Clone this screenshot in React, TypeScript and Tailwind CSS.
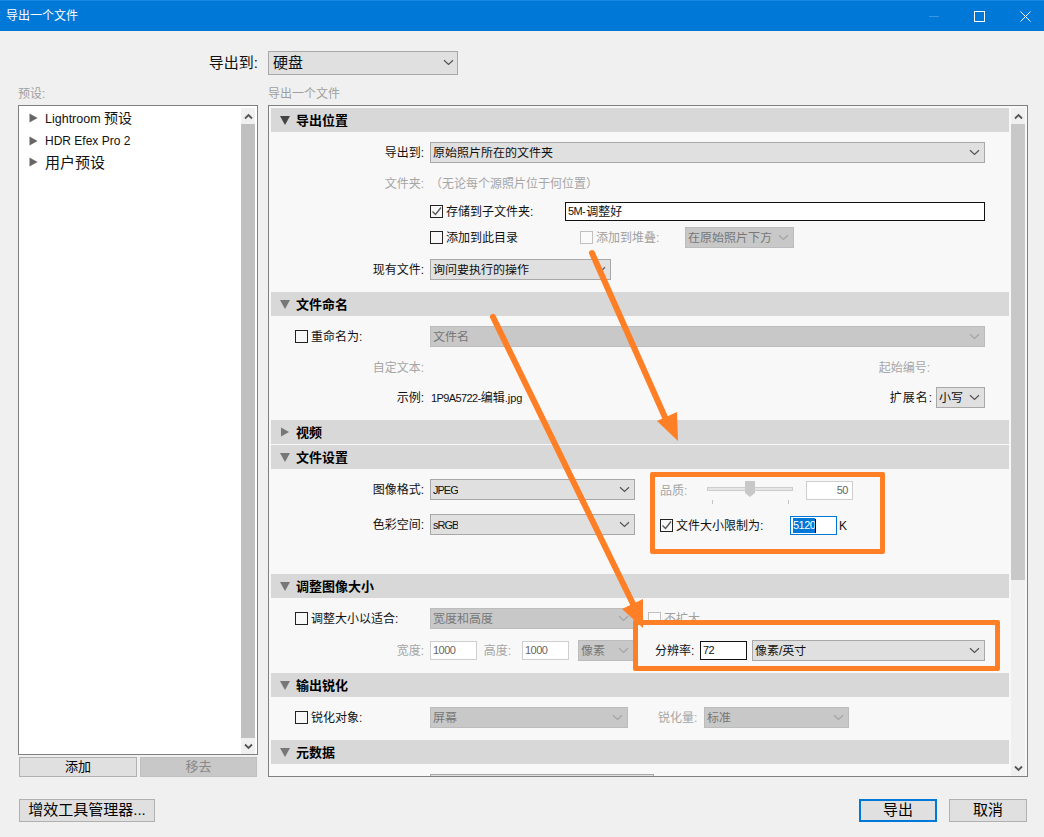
import React from "react";

const Chevron = ({ color = "#555" }: { color?: string }) => (
  <svg width="11" height="7" viewBox="0 0 11 7" className="shrink-0">
    <path d="M1 1.2 L5.5 5.5 L10 1.2" fill="none" stroke={color} strokeWidth="1.2" />
  </svg>
);

const Select = ({ w, disabled, label, className = "" }: { w: string; disabled?: boolean; label: React.ReactNode; className?: string }) => (
  <div
    className={`${w} h-[21px] shrink-0 flex items-center justify-between pl-[2px] pr-[4px] border text-[12px] leading-none ${
      disabled ? "bg-[#c8c8c8] border-[#bcbcbc] text-[#777]" : "bg-[#e0e0e0] border-[#a8a8a8] text-[#111]"
    } ${className}`}
  >
    <span className="whitespace-nowrap overflow-hidden">{label}</span>
    <Chevron color={disabled ? "#a4a4a4" : "#555"} />
  </div>
);

const Check = ({ checked, disabled }: { checked?: boolean; disabled?: boolean }) => (
  <div className={`w-[13px] h-[13px] shrink-0 border flex items-center justify-center ${disabled ? "border-[#c0c0c0] bg-[#fafafa]" : "border-[#222] bg-[#f8f8f8]"}`}>
    {checked && (
      <svg width="11" height="11" viewBox="0 0 11 11">
        <path d="M1.5 5.5 L4.5 8.5 L10 1.5" fill="none" stroke="#555" strokeWidth="1.3" />
      </svg>
    )}
  </div>
);

const Label = ({ children, muted }: { children: React.ReactNode; muted?: boolean }) => (
  <div className={`w-[153px] mr-[6px] shrink-0 text-right text-[12px] leading-none whitespace-nowrap ${muted ? "text-[#a6a6a6]" : "text-[#111]"}`}>{children}</div>
);

const CheckLabel = ({ children, checked, muted, className = "" }: { children: React.ReactNode; checked?: boolean; muted?: boolean; className?: string }) => (
  <div className={`flex items-center gap-[3px] shrink-0 text-[12px] leading-none whitespace-nowrap ${muted ? "text-[#a0a0a0]" : "text-[#111]"} ${className}`}>
    <Check checked={checked} disabled={muted} />
    <span>{children}</span>
  </div>
);

const Tri = ({ open, dark }: { open?: boolean; dark?: boolean }) => (
  <svg width="12" height="12" viewBox="0 0 12 12" className="shrink-0">
    {open ? <path d="M1 2 H11 L6 11 Z" fill={dark ? "#444" : "#777"} /> : <path d="M2 1.5 V10.5 L10 6 Z" fill="#777" />}
  </svg>
);

const Header = ({ title, open = true, dark }: { title: string; open?: boolean; dark?: boolean }) => (
  <div className="h-6 bg-[#d8d8d8] flex items-center pl-[8px] gap-[5px] text-[13px] font-bold text-black leading-none">
    <Tri open={open} dark={dark} />
    <span>{title}</span>
  </div>
);

const SmallInput = ({ w, value, dark, right, className = "" }: { w: string; value: string; dark?: boolean; right?: boolean; className?: string }) => (
  <div
    className={`${w} h-[19px] shrink-0 bg-white border flex items-center px-[2px] text-[11px] tracking-[-0.5px] leading-none ${dark ? "border-[#111] text-[#111]" : "border-[#cfcfcf] text-[#666]"} ${right ? "justify-end" : ""} ${className}`}
  >
    {value}
  </div>
);

const ScrollArrow = ({ up }: { up?: boolean }) => (
  <div className="h-[16px] shrink-0 flex items-center justify-center">
    <svg width="9" height="7" viewBox="0 0 9 7">
      <path d={up ? "M1 5.5 L4.5 2 L8 5.5" : "M1 1.5 L4.5 5 L8 1.5"} fill="none" stroke="#555" strokeWidth="1.8" />
    </svg>
  </div>
);

const Button = ({ children, className = "" }: { children: React.ReactNode; className?: string }) => (
  <div className={`flex items-center justify-center border text-black leading-none shrink-0 pb-[2px] ${className}`}>{children}</div>
);

const ListItem = ({ children, className = "" }: { children: React.ReactNode; className?: string }) => (
  <div className={`flex items-center pl-[10px] gap-[7px] leading-none text-[#111] ${className}`}>
    <svg width="9" height="10" viewBox="0 0 9 10" className="shrink-0">
      <path d="M0.5 0.5 V9.5 L8.5 5 Z" fill="#666" />
    </svg>
    <span>{children}</span>
  </div>
);

export default function App() {
  return (
    <div className="relative w-[1044px] h-[837px] overflow-hidden bg-[#f0f0f0] flex flex-col [font-family:'Liberation_Sans','Noto_Sans_CJK_SC',sans-serif]">
      {/* Title bar */}
      <div className="h-[31px] shrink-0 bg-[#0078d7] border-t border-[#1a86dd] flex items-center justify-between pl-[6px] text-white text-[12px] leading-none">
        <span>导出一个文件</span>
        <div className="flex items-center">
          <div className="w-[10px] h-px bg-[#3d97e0] mr-[35px]" />
          <div className="w-[11px] h-[11px] border border-white mr-[35px]" />
          <svg width="11" height="11" viewBox="0 0 11 11" className="mr-[13px]">
            <path d="M0.5 0.5 L10.5 10.5 M10.5 0.5 L0.5 10.5" stroke="#fff" strokeWidth="1" />
          </svg>
        </div>
      </div>

      {/* Destination */}
      <div className="mt-[20px] h-[24px] flex items-center shrink-0">
        <div className="w-[258px] pb-[2px] text-right text-[15px] leading-none text-[#111]">导出到:</div>
        <div className="ml-[10px] w-[190px] h-[24px] bg-[#e0e0e0] border border-[#a8a8a8] flex items-center justify-between pl-[4px] pr-[3px] pb-px text-[15px] leading-none text-[#111]">
          <span>硬盘</span>
          <Chevron />
        </div>
      </div>

      {/* Column captions */}
      <div className="h-[30px] shrink-0 flex items-end pb-[5px] text-[12px] leading-none text-[#a0a0a0]">
        <div className="ml-[18px] w-[250px]">预设:</div>
        <div>导出一个文件</div>
      </div>

      {/* Main */}
      <div className="h-[672px] shrink-0 flex pl-[18px] gap-[10px]">
        {/* Presets */}
        <div className="w-[240px] flex flex-col">
          <div className="h-[650px] bg-white border border-[#808080] flex justify-between pr-[2px] pt-[1px]">
            <div className="flex-1">
              <ListItem className="h-[22px] text-[12.5px]">
                Lightroom <span className="text-[14px]">预设</span>
              </ListItem>
              <ListItem className="h-[22px] mt-px text-[12px]">HDR Efex Pro 2</ListItem>
              <ListItem className="h-[20px] text-[15px]">用户预设</ListItem>
            </div>
            <div className="w-[14px] shrink-0 flex flex-col bg-[#f0f0f0] mt-px">
              <ScrollArrow up />
              <div className="flex-1 bg-[#c0c0c0]" />
              <ScrollArrow />
            </div>
          </div>
          <div className="mt-[2px] pl-px flex gap-[3px] text-[13px]">
            <Button className="w-[118px] h-[20px] bg-[#e0e0e0] border-[#b0b0b0]">添加</Button>
            <Button className="w-[117px] h-[20px] bg-[#c8c8c8] border-[#c0c0c0] !text-[#888]">移去</Button>
          </div>
        </div>

        {/* Export settings */}
        <div className="w-[760px] h-[672px] bg-[#f8f8f8] border border-[#808080] flex pl-[2px] pr-[2px] pt-[2px]">
          <div className="w-[738px] shrink-0 overflow-hidden">
            {/* 导出位置 */}
            <Header title="导出位置" dark />
            <div className="h-[160px] pt-[10px]">
              <div className="flex items-center">
                <Label>导出到:</Label>
                <Select w="w-[555px]" label="原始照片所在的文件夹" />
              </div>
              <div className="flex items-center h-[20px] mt-[11px]">
                <Label muted>文件夹:</Label>
                <span className="text-[12px] leading-none text-[#a6a6a6]">（无论每个源照片位于何位置）</span>
              </div>
              <div className="flex items-center h-[19px] mt-[8px]">
                <div className="w-[159px] shrink-0" />
                <CheckLabel checked className="w-[135px]">存储到子文件夹:</CheckLabel>
                <div className="w-[420px] h-[19px] bg-white border border-[#111] flex items-center px-[2px] text-[12px] leading-none text-[#111]">
                  <span className="text-[11px] tracking-[-0.6px] mr-[1px]">5M-</span>调整好
                </div>
              </div>
              <div className="flex items-center h-[21px] mt-[6px]">
                <div className="w-[159px] shrink-0" />
                <CheckLabel className="w-[150px]">添加到此目录</CheckLabel>
                <CheckLabel muted className="w-[105px]">添加到堆叠:</CheckLabel>
                <Select w="w-[109px]" disabled label="在原始照片下方" />
              </div>
              <div className="flex items-center mt-[11px]">
                <Label>现有文件:</Label>
                <Select w="w-[181px]" label="询问要执行的操作" />
              </div>
            </div>

            {/* 文件命名 */}
            <Header title="文件命名" />
            <div className="h-[104px] pt-[10px] pr-[24px]">
              <div className="flex items-center">
                <CheckLabel className="ml-[24px] w-[135px]">重命名为:</CheckLabel>
                <Select w="w-[555px]" disabled label="文件名" />
              </div>
              <div className="flex items-center h-[20px] mt-[11px]">
                <Label muted>自定文本:</Label>
                <span className="ml-auto mr-[55px] text-[12px] leading-none text-[#a6a6a6]">起始编号:</span>
              </div>
              <div className="flex items-center mt-[9px]">
                <Label>示例:</Label>
                <span className="ml-px text-[12px] leading-none text-[#111]">
                  <span className="text-[11px] tracking-[-0.6px]">1P9A5722-</span>编辑<span className="text-[11px]">.jpg</span>
                </span>
                <span className="ml-auto mr-[3px] text-[12px] tracking-[1px] leading-none text-[#111]">扩展名:</span>
                <Select w="w-[49px]" label="小写" />
              </div>
            </div>

            {/* 视频 */}
            <div className="mb-px">
              <Header title="视频" open={false} />
            </div>

            {/* 文件设置 */}
            <Header title="文件设置" />
            <div className="h-[105px] flex">
              <div className="w-[364px] shrink-0 pt-[10px]">
                <div className="flex items-center">
                  <Label>图像格式:</Label>
                  <Select w="w-[205px]" label={<span className="text-[11px] tracking-[-1px]">JPEG</span>} />
                </div>
                <div className="flex items-center mt-[14px]">
                  <Label>色彩空间:</Label>
                  <Select w="w-[205px]" label={<span className="text-[11px] tracking-[-1px]">sRGB</span>} />
                </div>
              </div>
              <div className="ml-[25px] pt-[12px]">
                <div className="flex items-start h-[19px]">
                  <span className="w-[47px] h-[19px] flex items-center text-[12px] leading-none text-[#a6a6a6]">品质:</span>
                  <svg width="86" height="24" viewBox="0 0 86 24" className="shrink-0 overflow-visible">
                    <rect x="0.5" y="6.5" width="85" height="3" fill="#e4e6e6" stroke="#cdcdcd" />
                    <path d="M38 0 H48 V12 L43 16 L38 12 Z" fill="#c8c8c8" />
                    <path d="M5.5 19 V23 M81.5 19 V23" stroke="#c4c4c4" />
                  </svg>
                  <SmallInput w="w-[47px]" value="50" right className="ml-[13px] pr-[4px]" />
                </div>
                <div className="flex items-center mt-[16px] h-[19px]">
                  <CheckLabel checked className="w-[130px]">文件大小限制为:</CheckLabel>
                  <div className="w-[47px] h-[19px] shrink-0 bg-white border border-[#0078d7] flex items-center pl-[2px] text-[11px] tracking-[-0.5px] leading-none">
                    <span className="bg-[#0078d7] text-white h-[15px] flex items-center">5120</span>
                    <span className="w-px h-[14px] bg-black" />
                  </div>
                  <span className="ml-[2px] text-[12px] leading-none text-[#111]">K</span>
                </div>
              </div>
            </div>

            {/* 调整图像大小 */}
            <Header title="调整图像大小" />
            <div className="h-[75px] pt-[10px]">
              <div className="flex items-center">
                <CheckLabel className="ml-[24px] w-[135px]">调整大小以适合:</CheckLabel>
                <Select w="w-[204px]" disabled label="宽度和高度" />
                <CheckLabel muted className="ml-[14px]">不扩大</CheckLabel>
              </div>
              <div className="flex items-center mt-[11px]">
                <Label muted>宽度:</Label>
                <SmallInput w="w-[47px]" value="1000" />
                <span className="w-[45px] pr-[11px] shrink-0 text-right text-[12px] leading-none text-[#a6a6a6]">高度:</span>
                <SmallInput w="w-[47px]" value="1000" />
                <Select w="w-[56px]" disabled label="像素" className="ml-[9px]" />
              </div>
            </div>

            {/* 输出锐化 */}
            <Header title="输出锐化" />
            <div className="h-[43px] pt-[10px]">
              <div className="flex items-center">
                <CheckLabel className="ml-[24px] w-[135px]">锐化对象:</CheckLabel>
                <Select w="w-[198px]" disabled label="屏幕" />
                <span className="ml-[30px] w-[42px] text-[12px] leading-none text-[#a6a6a6] whitespace-nowrap">锐化量:</span>
                <Select w="w-[145px]" disabled label="标准" className="ml-[4px]" />
              </div>
            </div>

            {/* 元数据 */}
            <Header title="元数据" />
            <div className="pt-[10px] pl-[159px]">
              <Select w="w-[224px]" label="" />
            </div>
          </div>
          <div className="w-[14px] shrink-0 ml-[2px] flex flex-col bg-[#f0f0f0]">
            <ScrollArrow up />
            <div className="h-[456px] bg-[#c8c8c8]" />
            <div className="flex-1" />
            <ScrollArrow />
          </div>
        </div>
      </div>

      {/* Footer */}
      <div className="mt-[22px] flex pl-[19px] pr-[17px]">
        <Button className="w-[136px] h-[23px] bg-[#e0e0e0] border-[#b0b0b0] text-[15px]">增效工具管理器...</Button>
        <Button className="ml-auto w-[78px] h-[23px] bg-[#e0e0e0] !border-2 border-[#0078d7] text-[15px]">导出</Button>
        <Button className="ml-[12px] w-[78px] h-[23px] bg-[#e0e0e0] border-[#b0b0b0] text-[15px]">取消</Button>
      </div>

      {/* Annotation overlays */}
      <div className="absolute left-[650px] top-[472px] w-[235px] h-[82px] border-[5px] border-[#ff7f27] rounded-[2px]" />
      <div className="absolute left-[633px] top-[620px] w-[367px] h-[51px] border-[5px] border-[#ff7f27] rounded-[2px] bg-[#f8f8f8] flex items-start pt-[15px] pl-[17px]">
        <span className="w-[45px] h-[21px] flex items-center text-[12px] leading-none text-[#111]">分辨率:</span>
        <SmallInput w="w-[47px]" value="72" dark className="mt-px" />
        <Select w="w-[233px]" label="像素/英寸" className="ml-[5px]" />
      </div>
      <svg width="1044" height="837" viewBox="0 0 1044 837" className="absolute left-0 top-0 pointer-events-none">
        <path d="M592 253 L668 424" stroke="#ff7f27" strokeWidth="6" strokeLinecap="round" />
        <path d="M678 441 L657 421 L677 412 Z" fill="#ff7f27" />
        <path d="M493 317 L634 606" stroke="#ff7f27" strokeWidth="6" strokeLinecap="round" />
        <path d="M643 628 L622 609 L643 599 Z" fill="#ff7f27" />
      </svg>
    </div>
  );
}
